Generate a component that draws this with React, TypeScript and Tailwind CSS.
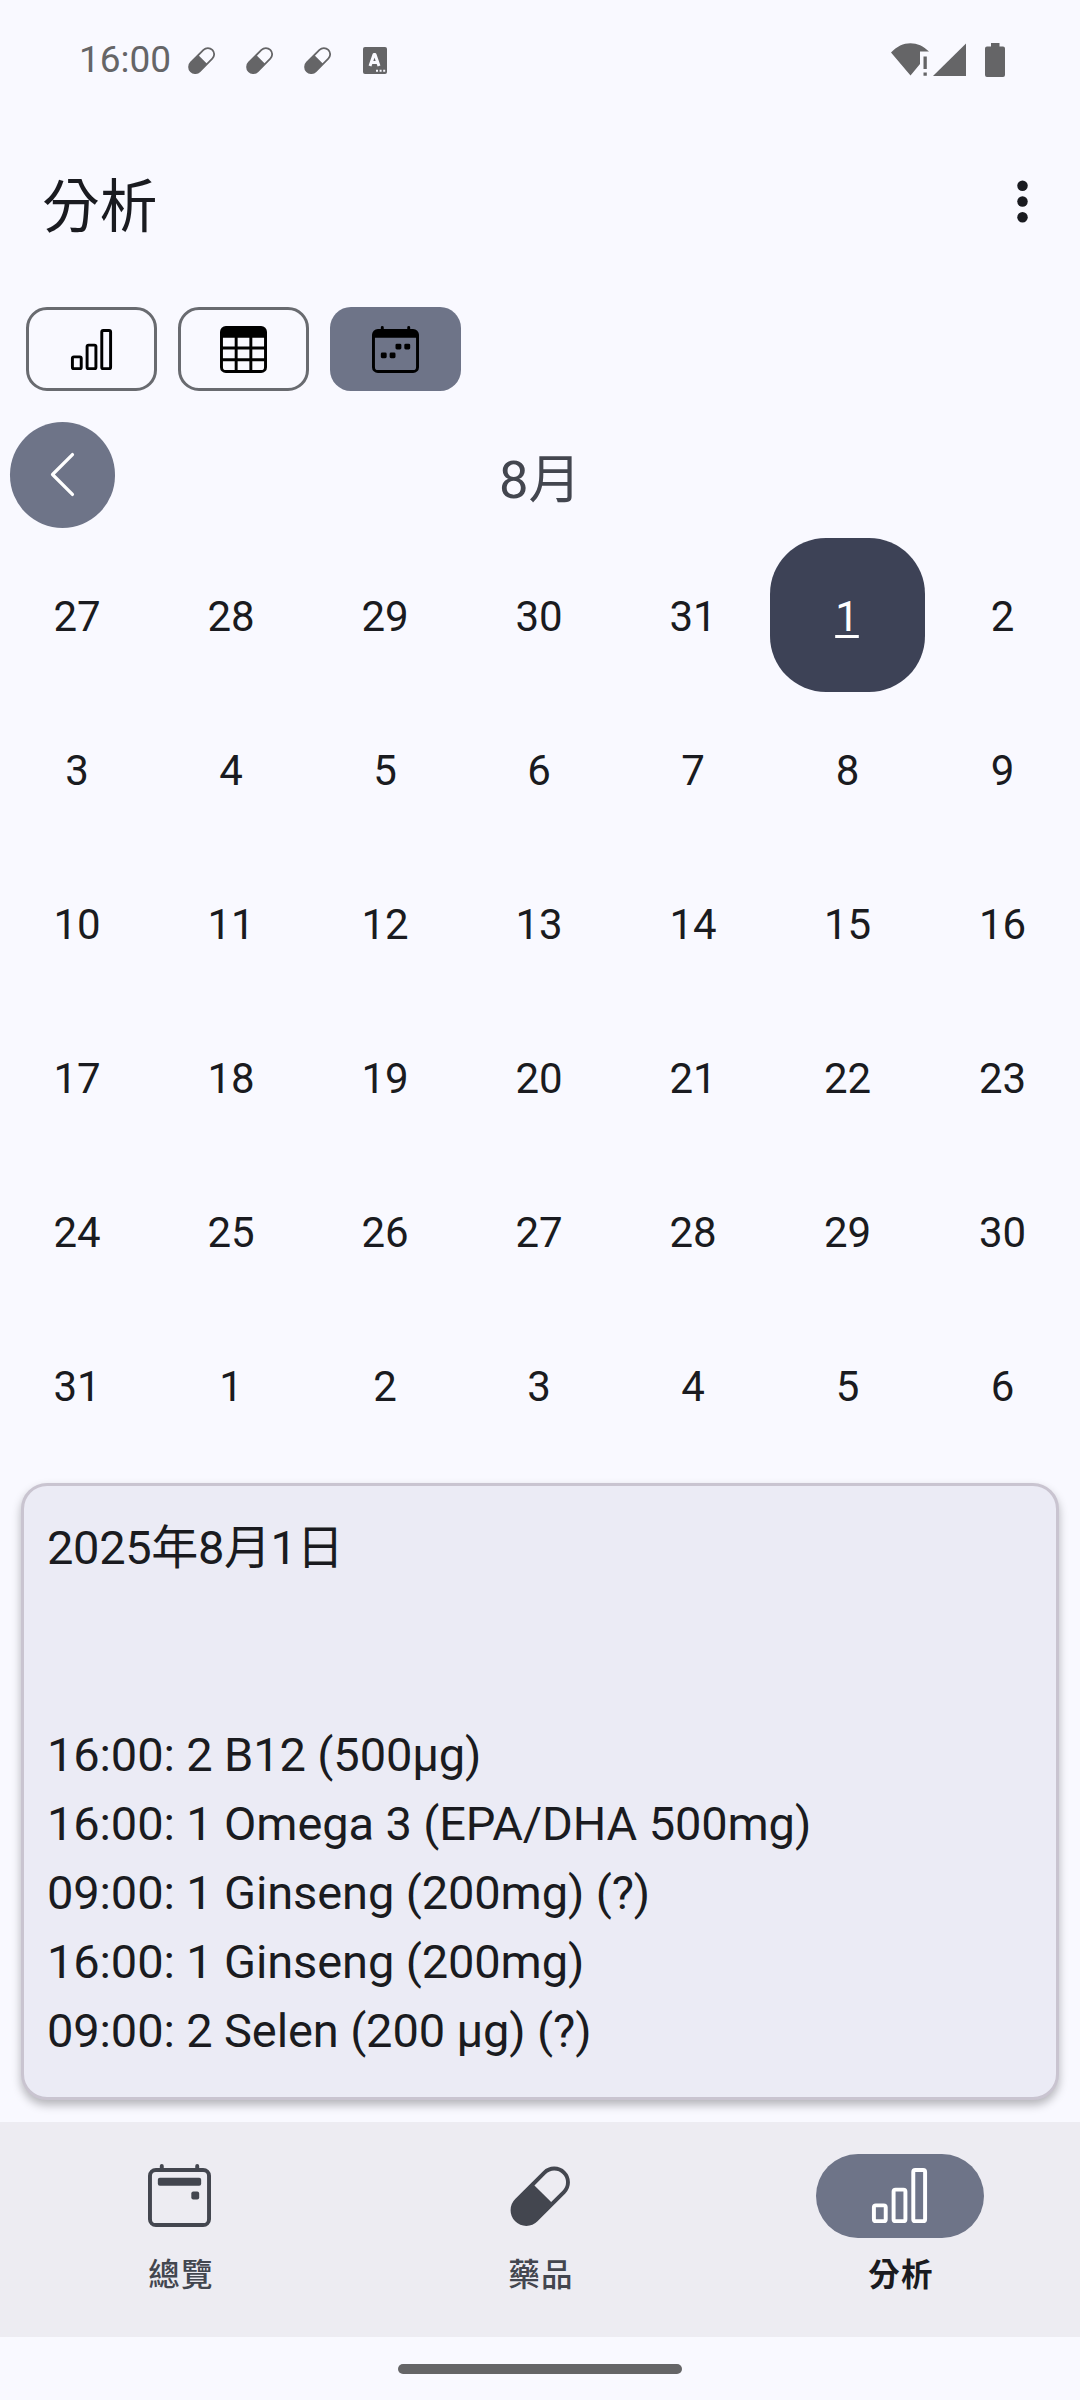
import type { ReactNode } from "react";
import {
  BsBarChart,
  BsCalendar2Event,
  BsCalendarWeek,
  BsCapsule,
  BsChevronLeft,
  BsTable,
} from "react-icons/bs";

const days = [
  27, 28, 29, 30, 31, 1, 2,
  3, 4, 5, 6, 7, 8, 9,
  10, 11, 12, 13, 14, 15, 16,
  17, 18, 19, 20, 21, 22, 23,
  24, 25, 26, 27, 28, 29, 30,
  31, 1, 2, 3, 4, 5, 6,
];
const selectedIndex = 5;

const entries = [
  "16:00: 2 B12 (500µg)",
  "16:00: 1 Omega 3 (EPA/DHA 500mg)",
  "09:00: 1 Ginseng (200mg) (?)",
  "16:00: 1 Ginseng (200mg)",
  "09:00: 2 Selen (200 µg) (?)",
];

function StatusBar() {
  return (
    <header className="flex h-[120px] items-center pr-[75px] pl-[79px] text-[#656567]">
      <span className="w-[107.5px] text-[37px] leading-[44px]">16:00</span>
      <div className="flex items-center gap-[29.5px]">
        <BsCapsule className="size-[28.5px]" />
        <BsCapsule className="size-[28.5px]" />
        <BsCapsule className="size-[28.5px]" />
        <svg className="ml-[2px] h-[27px] w-[24px]" viewBox="0 0 24 27">
          <rect width="24" height="27" rx="2" fill="currentColor" />
          <path d="M7 19 11 7.5h1L16 19M8.5 15.5h6" fill="none" stroke="#f9f9ff" strokeWidth="3" strokeLinejoin="round" />
          <path d="M13 22.8h2v2h-2zM16.6 22.8h2v2h-2zM20.2 22.8h2v2h-2z" fill="#f9f9ff" />
        </svg>
      </div>
      <svg className="ml-auto h-[34px] w-[38px]" viewBox="0 0 38 34" fill="currentColor">
        <path d="M0 9.5C11-2.8 27-2.8 38 8.5H29V21L19.5 32.5Z" />
        <path d="M32.5 13.5h3.3V26h-3.3zM32.5 29.5h3.3v3.2h-3.3z" />
      </svg>
      <svg className="ml-[4px] h-[34px] w-[33px]" viewBox="0 0 33 34" fill="currentColor">
        <path d="M33 .5V33H0Z" />
      </svg>
      <svg className="ml-[19px] h-[34px] w-[20px]" viewBox="0 0 20 34" fill="currentColor">
        <path d="M6 0h8.5v3.5H18a2 2 0 0 1 2 2V32a2 2 0 0 1-2 2H2a2 2 0 0 1-2-2V5.5a2 2 0 0 1 2-2h4z" />
      </svg>
    </header>
  );
}

function Chip({ active = false, children }: { active?: boolean; children: ReactNode }) {
  return (
    <button
      className={
        active
          ? "flex h-[84px] w-[131px] items-center justify-center rounded-[21px] bg-[#6e7488] text-black"
          : "flex h-[84px] w-[131px] items-center justify-center rounded-[21px] border-[3px] border-[#696b70] text-black"
      }
    >
      {children}
    </button>
  );
}

function NavItem({ label, active = false, children }: { label: string; active?: boolean; children: ReactNode }) {
  return (
    <div className="flex flex-1 flex-col items-center pt-[32px]">
      <div
        className={
          active
            ? "flex h-[84px] w-[168px] items-center justify-center rounded-full bg-[#6e7488] pr-[1px] pb-[1px] text-white"
            : "flex h-[84px] w-[168px] items-center justify-center pr-[2px] pb-[2px] text-[#43464f]"
        }
      >
        {children}
      </div>
      <span
        className={
          active
            ? "mt-[17px] pl-[2px] text-[31.5px] leading-[42px] font-bold tracking-[1.3px] text-[#1a1b20]"
            : "mt-[17px] pl-[2px] text-[31.5px] leading-[42px] font-medium tracking-[1.3px] text-[#43464f]"
        }
      >
        {label}
      </span>
    </div>
  );
}

export default function App() {
  return (
    <div className="flex h-[2400px] w-[1080px] flex-col overflow-hidden bg-[#f9f9ff] font-['Roboto','Noto_Sans_CJK_TC',sans-serif] text-[#1a1b20]">
      <StatusBar />

      <div className="flex h-[168px] items-center justify-between pr-[26px] pl-[42px]">
        <h1 className="pt-[5px] text-[57.75px] leading-[74px]">分析</h1>
        <svg className="size-[63px] -translate-y-[3px]" viewBox="0 0 24 24" fill="currentColor">
          <circle cx="12" cy="6" r="2" />
          <circle cx="12" cy="12" r="2" />
          <circle cx="12" cy="18" r="2" />
        </svg>
      </div>

      <div className="mt-[19px] flex h-[84px] gap-[21px] pl-[26px]">
        <Chip><BsBarChart className="size-[47px]" /></Chip>
        <Chip><BsTable className="size-[47px]" /></Chip>
        <Chip active><BsCalendarWeek className="size-[47px]" /></Chip>
      </div>

      <div className="mt-[31px] grid h-[116px] grid-cols-[105px_1fr_105px] px-[10px]">
        <button className="flex h-[106px] w-[105px] items-center justify-center rounded-full bg-[#6e7488] pb-[1px] text-white">
          <BsChevronLeft className="size-[53px]" />
        </button>
        <h2 className="pt-[26px] text-center text-[52.5px] leading-[64px] text-[#43464f]">8月</h2>
      </div>

      <div className="grid h-[924px] w-full grid-cols-[repeat(5,154px)_155px_155px] grid-rows-6 text-[42px] leading-[48px]">
        {days.map((day, i) => (
          <div
            key={i}
            className={
              i === selectedIndex
                ? "flex items-center justify-center rounded-[56px] bg-[#3d4256] pt-[4px] pr-[1px] text-white underline decoration-[2.5px] underline-offset-[4px]"
                : "flex items-center justify-center pt-[4px]"
            }
          >
            {day}
          </div>
        ))}
      </div>

      <section className="mx-[21px] mt-[21px] h-[617px] rounded-[26px] border-[3px] border-[#c9c4d0] bg-[#ebebf5] pt-[27px] pl-[23px] text-[47px] leading-[69px] shadow-[0_5px_10px_rgba(0,0,0,0.28)]">
        <p className="tracking-[-0.35px]">2025年8月1日</p>
        <ul className="mt-[138px] tracking-[-0.12px]">
          {entries.map((entry) => (
            <li key={entry}>{entry}</li>
          ))}
        </ul>
      </section>

      <nav className="mt-[22px] flex h-[215px] bg-[#edecf2]">
        <NavItem label="總覽"><BsCalendar2Event className="size-[63px]" /></NavItem>
        <NavItem label="藥品"><BsCapsule className="size-[63px]" /></NavItem>
        <NavItem label="分析" active><BsBarChart className="size-[63px]" /></NavItem>
      </nav>

      <div className="flex justify-center pt-[27px]">
        <div className="h-[10px] w-[284px] rounded-full bg-[#656567]" />
      </div>
    </div>
  );
}
